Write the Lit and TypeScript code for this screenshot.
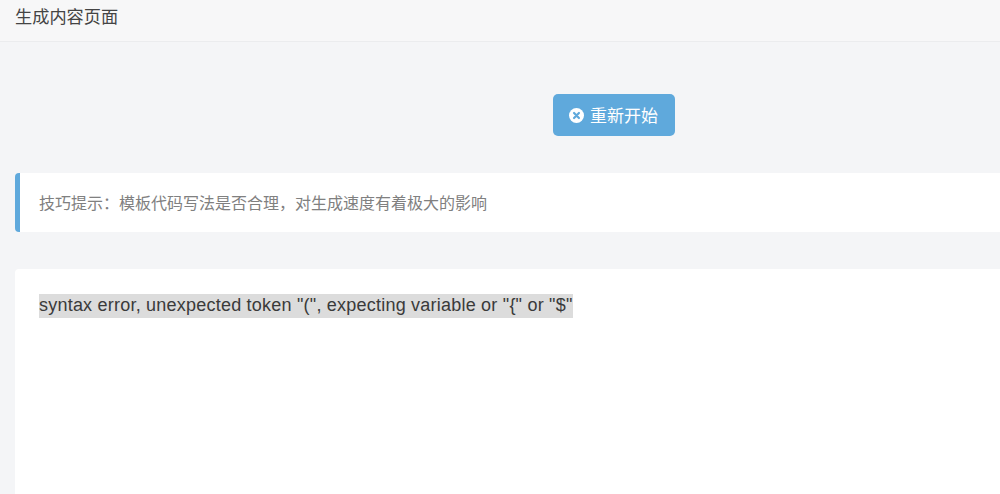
import { LitElement, html, css } from "lit";
import { customElement } from "lit/decorators.js";

@customElement("app-root")
export class AppRoot extends LitElement {
  static styles = css`
    :host {
      display: block;
      width: 1000px;
      height: 494px;
      overflow: hidden;
      background: #f4f5f7;
      font-family: "Liberation Sans", "Noto Sans CJK SC", sans-serif;
    }
    .head {
      height: 41px;
      box-sizing: content-box;
      border-bottom: 1px solid #ebecee;
      background: #f7f7f8;
      padding-left: 15px;
      font-size: 17.2px;
      line-height: 34px;
      color: #444;
    }
    .content {
      padding: 52px 0 0 15px;
    }
    .actions {
      display: flex;
      justify-content: center;
      margin-left: 213px;
      width: 772px;
    }
    .btn {
      display: flex;
      align-items: center;
      gap: 6px;
      width: 122px;
      height: 42px;
      box-sizing: border-box;
      padding: 0 0 2px 16px;
      background: #5fa9dc;
      border-radius: 5px;
      color: #fff;
      font-size: 17px;
    }
    .btn svg {
      width: 15px;
      height: 15px;
      margin-top: 2px;
    }
    .tip {
      margin-top: 37px;
      height: 59px;
      box-sizing: border-box;
      background: #fff;
      border-left: 5px solid #5fa9dc;
      border-radius: 4px 0 0 4px;
      padding-left: 19px;
      font-size: 16px;
      line-height: 61px;
      color: #808080;
    }
    .card {
      margin-top: 37px;
      height: 225px;
      box-sizing: border-box;
      background: #fff;
      border-radius: 4px 0 0 0;
      padding: 25px 0 0 24px;
      font-size: 18px;
      letter-spacing: 0.22px;
      line-height: 22px;
      color: #3a3a3a;
    }
    .sel {
      background: #dcdcdc;
      display: inline-block;
      padding-bottom: 2px;
    }
  `;

  render() {
    return html`
      <div class="head">生成内容页面</div>
      <div class="content">
        <div class="actions">
          <div class="btn">
            <svg viewBox="0 0 16 16">
              <circle cx="8" cy="8" r="8" fill="#fff"></circle>
              <path d="M5.4 5.4l5.2 5.2M10.6 5.4l-5.2 5.2" stroke="#5fa9dc" stroke-width="2.4" stroke-linecap="round"></path>
            </svg>
            <span>重新开始</span>
          </div>
        </div>
        <div class="tip">技巧提示：模板代码写法是否合理，对生成速度有着极大的影响</div>
        <div class="card"><span class="sel">syntax error, unexpected token "(", expecting variable or "{" or "$"</span></div>
      </div>
    `;
  }
}
